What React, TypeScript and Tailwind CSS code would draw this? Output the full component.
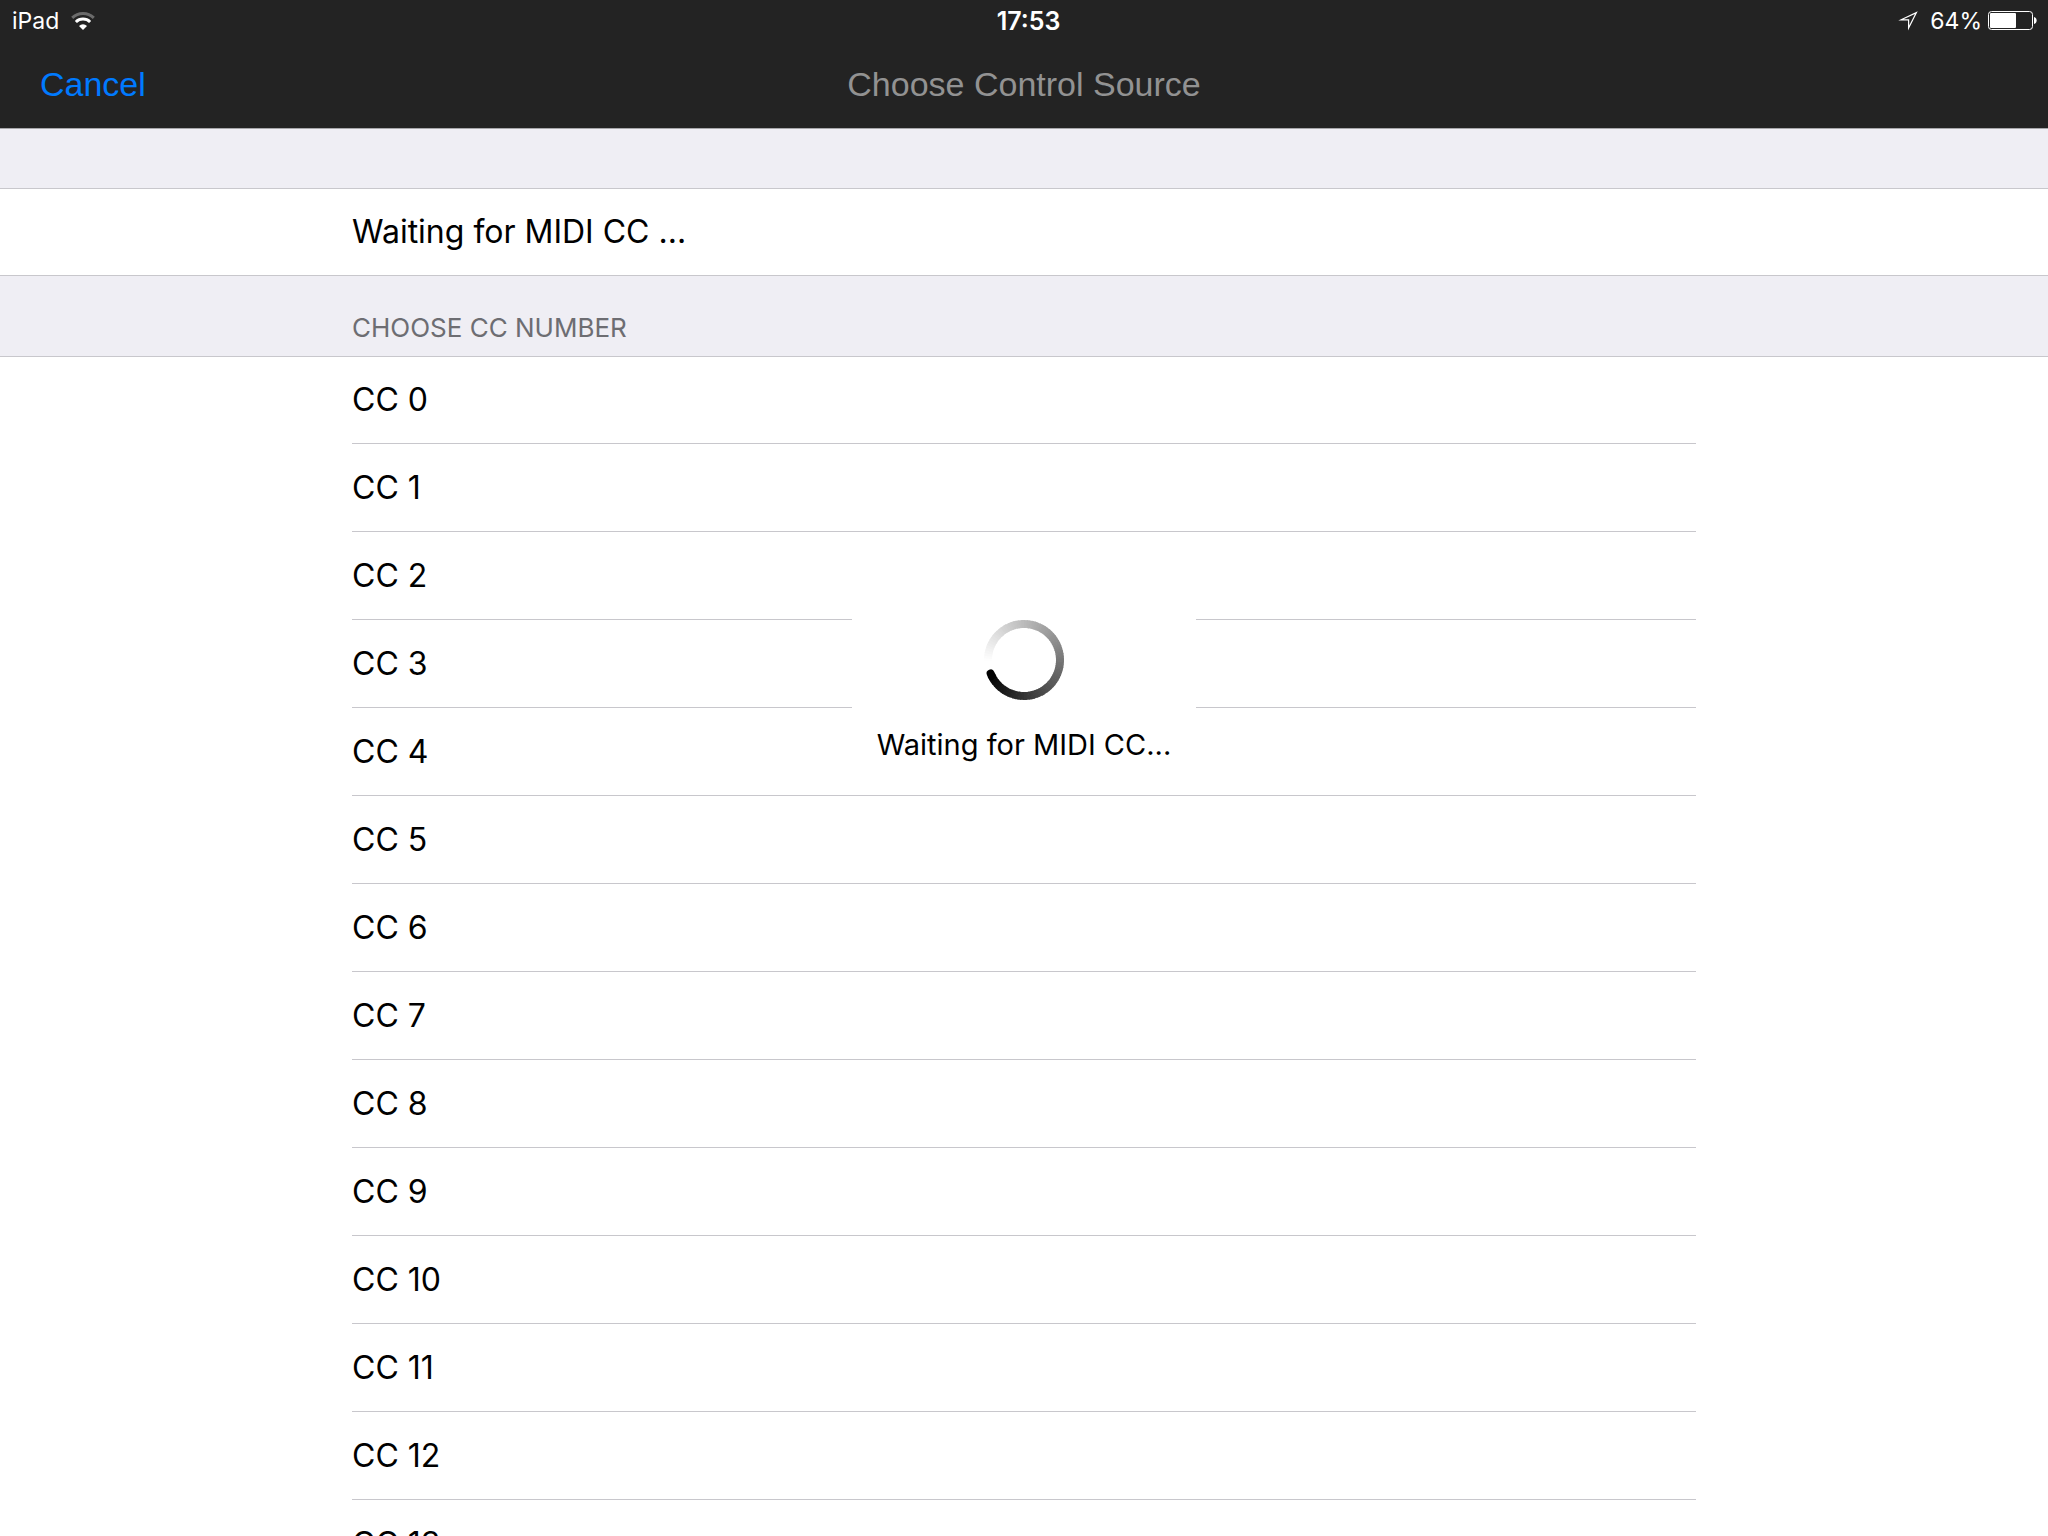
const ccNumbers = Array.from({ length: 14 }, (_, n) => n);

const RING_START = 268;
const RING_SWEEP = 340;
const RING_STEP = 4;

function ringPoint(deg: number) {
  const a = (deg * Math.PI) / 180;
  return `${(40 + 36 * Math.sin(a)).toFixed(3)} ${(40 - 36 * Math.cos(a)).toFixed(3)}`;
}

function Spinner() {
  const count = RING_SWEEP / RING_STEP;
  const segments = Array.from({ length: count }, (_, i) => {
    const from = RING_START + i * RING_STEP;
    const to = from + RING_STEP + (i < count - 1 ? 1 : 0);
    const v = Math.round(255 * (1 - (i + 0.5) / count));
    return { d: `M${ringPoint(from)}A36 36 0 0 1 ${ringPoint(to)}`, color: `rgb(${v},${v},${v})` };
  });
  return (
    <svg viewBox="0 0 80 80" className="size-20" fill="none" strokeWidth="8" aria-hidden="true">
      {segments.map((s, i) => (
        <path key={i} d={s.d} stroke={s.color} strokeLinecap={i === count - 1 ? "round" : "butt"} />
      ))}
    </svg>
  );
}

function WifiIcon() {
  return (
    <svg viewBox="0 0 24 18" className="h-[18px] w-6" fill="none" aria-hidden="true">
      <path d="M1.2 5.9A15.6 15.6 0 0 1 22.8 5.9" stroke="#6b6b6b" strokeWidth="3" />
      <path d="M4.9 10A10.2 10.2 0 0 1 19.1 10" stroke="#fff" strokeWidth="3" />
      <path d="M12 18L8 13.9A5.8 5.8 0 0 1 16 13.9Z" fill="#fff" />
    </svg>
  );
}

function LocationIcon() {
  return (
    <svg viewBox="0 0 20 20" className="size-5" fill="none" aria-hidden="true">
      <path d="M18.4 1.6L3 8.8L10.6 8.8L10.6 17Z" stroke="#fff" strokeWidth="1.2" strokeMiterlimit="10" />
    </svg>
  );
}

function BatteryIcon() {
  return (
    <svg viewBox="0 0 49 20" className="h-5 w-[49px]" fill="none" aria-hidden="true">
      <rect x="0.5" y="0.5" width="44" height="18" rx="3" stroke="#fff" />
      <rect x="2" y="2" width="26" height="15" rx="1" fill="#fff" />
      <path d="M46 6C49.5 6.5 49.5 12.5 46 13Z" fill="#fff" />
    </svg>
  );
}

export default function App() {
  return (
    <div className="relative flex h-screen flex-col overflow-hidden bg-white font-['Inter','Noto_Sans',sans-serif] text-black">
      <header className="shrink-0 border-b border-[#a7a7aa] bg-[#232323]">
        <div className="grid h-10 grid-cols-3 items-center pt-0.5 pr-[11px] pl-3 text-2xl leading-none text-white">
          <div className="flex items-center gap-3 text-[23px]">
            <span>iPad</span>
            <WifiIcon />
          </div>
          <time className="pl-2 text-center text-[25px] font-semibold">17:53</time>
          <div className="flex items-center justify-end text-[23px]">
            <LocationIcon />
            <span className="mr-1.5 ml-3">64%</span>
            <BatteryIcon />
          </div>
        </div>
        <nav className="grid h-[88px] grid-cols-[1fr_auto_1fr] items-center px-10 font-['Liberation_Sans',Arial,sans-serif] text-[34px]">
          <button type="button" className="justify-self-start text-[#007aff]">Cancel</button>
          <h1 className="text-[#929292]">Choose Control Source</h1>
        </nav>
      </header>

      <main className="min-h-0 flex-1 overflow-y-auto [scrollbar-width:none]">
        <div className="h-[59px] bg-[#efeef4]" />
        <section className="border-y border-[#c8c7cc]">
          <p className="mx-auto flex h-[86px] max-w-[1344px] items-center text-[32px]">Waiting for MIDI CC ...</p>
        </section>
        <section>
          <div className="border-b border-[#c8c7cc] bg-[#efeef4]">
            <h2 className="mx-auto flex h-20 max-w-[1344px] items-end pb-3 text-[26px] leading-8 text-[#6d6d72]">CHOOSE CC NUMBER</h2>
          </div>
          <ul className="mx-auto max-w-[1344px] text-[32px]">
            {ccNumbers.map((n) => (
              <li key={n} className="border-b border-[#c8c7cc]">
                <button type="button" className={n === 0 ? "flex h-[86px] w-full items-center" : "flex h-[87px] w-full items-center"}>
                  CC {n}
                </button>
              </li>
            ))}
          </ul>
        </section>
      </main>

      <div
        role="status"
        className="absolute top-[592px] left-1/2 flex w-[344px] -translate-x-1/2 flex-col items-center gap-6 bg-white pt-7 pb-6 text-[29px] leading-[42px]"
      >
        <Spinner />
        <span>Waiting for MIDI CC...</span>
      </div>
    </div>
  );
}
